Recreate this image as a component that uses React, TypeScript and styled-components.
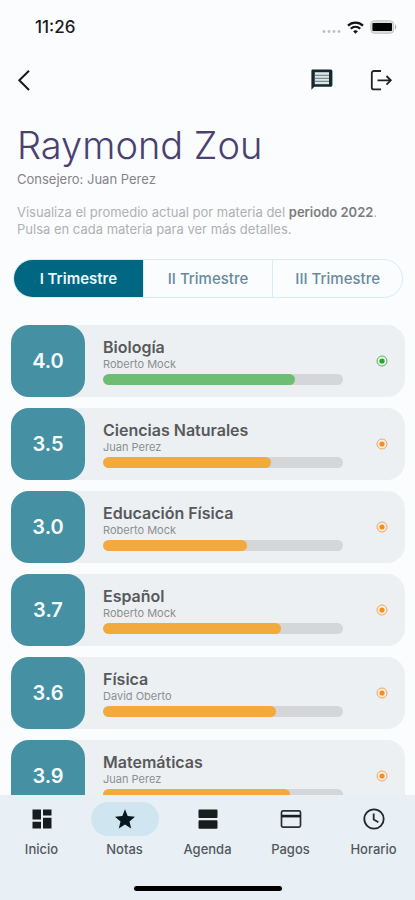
import React, { useState } from "react";
import styled, { createGlobalStyle } from "styled-components";

const GlobalStyle = createGlobalStyle`
  *, *::before, *::after { box-sizing: border-box; }
  body {
    margin: 0;
    background: #fbfcfe;
    font-family: Inter, "Liberation Sans", sans-serif;
  }
  button { font: inherit; color: inherit; background: none; border: 0; padding: 0; cursor: pointer; }
  a { color: inherit; text-decoration: none; }
  h1, h2, p, ul { margin: 0; padding: 0; }
  ul { list-style: none; }
  svg { display: block; }
`;

const Screen = styled.div`
  display: flex;
  flex-direction: column;
  height: 100vh;
`;

const StatusBar = styled.div`
  display: flex;
  flex: none;
  align-items: center;
  justify-content: space-between;
  height: 54px;
  padding: 0 18px 0 35px;
`;

const Clock = styled.time`
  font-size: 17px;
  font-weight: 500;
  line-height: 20px;
  color: #1b1b1d;
`;

const StatusIcons = styled.div`
  display: flex;
  align-items: center;
  gap: 6px;
`;

const AppBar = styled.header`
  display: flex;
  flex: none;
  align-items: center;
  justify-content: space-between;
  height: 52px;
  padding: 0 22px 0 12px;
`;

const Actions = styled.div`
  display: flex;
  gap: 35px;
`;

const IconButton = styled.button`
  display: grid;
  place-items: center;
  width: 24px;
  height: 24px;
`;

const Content = styled.main`
  flex: 1;
  min-height: 0;
  overflow-y: auto;
  scrollbar-width: none;
`;

const Intro = styled.section`
  padding: 15px 16px 0 17px;
`;

const StudentName = styled.h1`
  font-size: 38px;
  font-weight: 300;
  line-height: 48px;
  color: #4a4170;
`;

const Advisor = styled.p`
  margin-top: 2px;
  font-size: 13px;
  line-height: 16px;
  color: #858588;
`;

const Help = styled.p`
  margin-top: 17px;
  font-size: 13px;
  line-height: 17px;
  color: #b0b1b3;

  strong { font-weight: 600; color: #7c7d80; }
`;

const Terms = styled.div`
  display: flex;
  height: 39px;
  margin: 21px 12px 0 13px;
  overflow: hidden;
  border: 1px solid #d5edf8;
  border-radius: 20px;
`;

const Term = styled.button<{ $active: boolean }>`
  flex: 1;
  font-size: 15px;
  font-weight: ${(p) => (p.$active ? 600 : 500)};
  line-height: 20px;
  color: ${(p) => (p.$active ? "#eaf7fb" : "#678b9c")};
  background: ${(p) => (p.$active ? "#006783" : "transparent")};

  & + & { border-left: 1px solid #d5edf8; }
`;

const SubjectList = styled.ul`
  display: flex;
  flex-direction: column;
  gap: 11px;
  padding: 27px 10px 16px 11px;
`;

const SubjectCard = styled.button`
  display: flex;
  align-items: center;
  width: 100%;
  height: 72px;
  padding-right: 17px;
  text-align: left;
  background: #ecf0f3;
  border-radius: 18px;
`;

const Score = styled.span`
  display: grid;
  flex: none;
  place-items: center;
  width: 74px;
  height: 72px;
  font-size: 20px;
  font-weight: 600;
  line-height: 24px;
  color: #f5fcfe;
  background: #4690a3;
  border-radius: 18px;
`;

const SubjectBody = styled.span`
  display: flex;
  flex: 1;
  flex-direction: column;
  margin: 0 33px 0 18px;
`;

const SubjectName = styled.span`
  font-size: 16px;
  font-weight: 600;
  line-height: 20px;
  color: #58595b;
`;

const Teacher = styled.span`
  font-size: 11px;
  line-height: 14px;
  color: #8d8e90;
`;

const Track = styled.span`
  display: block;
  height: 11px;
  margin-top: 3px;
  overflow: hidden;
  background: #d5d6d7;
  border-radius: 6px;
`;

const Fill = styled.span<{ $color: string }>`
  display: block;
  height: 100%;
  background: ${(p) => p.$color};
  border-radius: 6px;
`;

const BottomNav = styled.nav`
  display: flex;
  flex: none;
  flex-direction: column;
  align-items: center;
  height: 105px;
  padding: 7px 0 9px;
  background: #e8eff5;
`;

const NavItems = styled.div`
  display: flex;
  width: 100%;
`;

const NavLink = styled.a`
  display: flex;
  flex: 1;
  flex-direction: column;
  align-items: center;
  gap: 5px;
  font-size: 13px;
  line-height: 16px;
  font-weight: 500;
  color: #54585c;
`;

const NavPill = styled.span<{ $active: boolean }>`
  display: grid;
  place-items: center;
  width: 68px;
  height: 34px;
  background: ${(p) => (p.$active ? "#cfe6f1" : "transparent")};
  border-radius: 17px;
`;

const HomeIndicator = styled.div`
  width: 148px;
  height: 5px;
  margin-top: auto;
  background: #000;
  border-radius: 3px;
`;

const SignalDots = () => (
  <svg width="19" height="13" viewBox="0 0 19 13" fill="#bdbec1">
    <circle cx="2" cy="10.5" r="1.4" />
    <circle cx="7" cy="10.5" r="1.4" />
    <circle cx="12" cy="10.5" r="1.4" />
    <circle cx="17" cy="10.5" r="1.4" />
  </svg>
);

const WifiIcon = () => (
  <svg width="17" height="13" viewBox="0 0 17 13" fill="none" stroke="#111" strokeWidth="2.2">
    <path d="M1 4.6a10.7 10.7 0 0 1 15 0" />
    <path d="M3.8 7.7a6.7 6.7 0 0 1 9.4 0" />
    <path d="M8.5 12.8 6.1 10.3a3.5 3.5 0 0 1 4.8 0z" fill="#111" stroke="none" />
  </svg>
);

const BatteryIcon = () => (
  <svg width="27" height="14" viewBox="0 0 27 14">
    <rect x="0.7" y="0.7" width="23" height="12.6" rx="3.6" fill="#dcdcdc" stroke="#c4c4c6" />
    <rect x="2.4" y="3" width="19.6" height="8" rx="1" fill="#000" />
    <path d="M25 4.5c1.7.6 1.7 4.4 0 5z" fill="#b0b0b3" />
  </svg>
);

const BackIcon = () => (
  <svg width="24" height="24" viewBox="0 0 24 24" fill="none" stroke="#17191a" strokeWidth="2">
    <path d="M17 2.7 7.3 12.3 17 22" />
  </svg>
);

const MessageIcon = () => (
  <svg width="24" height="24" viewBox="0 0 24 24">
    <path
      fill="#14282f"
      d="M2.6 1.6h18c1 0 1.800.800 1.800 1.800v13.600c0 1-.8 1.800-1.800 1.800H4.300L1.400 21.800V2.800c0-.7.500-1.200 1.200-1.200z"
    />
    <path fill="#dce4e7" d="M4.800 4.200h14.200v12H4.800z" />
    <path stroke="#7d8c92" strokeWidth="1.100" d="M4.800 7.400h14.200M4.800 10.400h14.200M4.800 13.400h14.200" />
  </svg>
);

const LogoutIcon = () => (
  <svg width="24" height="24" viewBox="0 0 24 24" fill="none" stroke="#202326" strokeWidth="1.800">
    <path d="M12 3H4.800a2 2 0 0 0-2 2v14.400a2 2 0 0 0 2 2H12" />
    <path d="M8.500 12.300h13M17.500 8l4.300 4.300-4.300 4.300" />
  </svg>
);

const TargetIcon = ({ color }: { color: string }) => (
  <svg width="12" height="12" viewBox="0 0 12 12">
    <circle cx="6" cy="6" r="5" fill="none" stroke={color} strokeOpacity="0.75" />
    <circle cx="6" cy="6" r="2.600" fill={color} />
  </svg>
);

const NavIcon = ({ name }: { name: string }) => (
  <svg width="24" height="24" viewBox="0 0 24 24" fill="#171c1f">
    {name === "Inicio" && (
      <path d="M2.500 2.500h8.500v10H2.500zM13 2.500h8.500v6H13zM13 10.700h8.500v10.800H13zM2.500 14.700h8.500v6.800H2.500z" />
    )}
    {name === "Notas" && (
      <path
        fill="#07171e"
        d="m12 17.600 6.200 4-1.700-7.200L22 9.700l-7.300-.6L12 2.200 9.300 9.100 2 9.700l5.500 4.700-1.700 7.200z"
      />
    )}
    {name === "Agenda" && (
      <path d="M3.500 2.500h17a1 1 0 0 1 1 1V10a1 1 0 0 1-1 1h-17a1 1 0 0 1-1-1V3.500a1 1 0 0 1 1-1zM3.500 13.300h17a1 1 0 0 1 1 1v6.400a1 1 0 0 1-1 1h-17a1 1 0 0 1-1-1v-6.400a1 1 0 0 1 1-1z" />
    )}
    {name === "Pagos" && (
      <>
        <rect x="2.500" y="3.800" width="19" height="16.400" rx="1.600" fill="none" stroke="#2a3034" strokeWidth="1.700" />
        <path d="M2.500 7.800h19v2.600h-19z" />
      </>
    )}
    {name === "Horario" && (
      <g fill="none" stroke="#22282c" strokeWidth="1.800">
        <circle cx="12" cy="12" r="9.700" />
        <path d="M11.700 6.500v6l4.700 2.800" />
      </g>
    )}
  </svg>
);

const MAX_SCORE = 5;
const terms = ["I Trimestre", "II Trimestre", "III Trimestre"];
const navItems = ["Inicio", "Notas", "Agenda", "Pagos", "Horario"];
const subjects = [
  { name: "Biología", teacher: "Roberto Mock", score: 4.0 },
  { name: "Ciencias Naturales", teacher: "Juan Perez", score: 3.5 },
  { name: "Educación Física", teacher: "Roberto Mock", score: 3.0 },
  { name: "Español", teacher: "Roberto Mock", score: 3.7 },
  { name: "Física", teacher: "David Oberto", score: 3.6 },
  { name: "Matemáticas", teacher: "Juan Perez", score: 3.9 },
];

export default function App() {
  const [term, setTerm] = useState(0);

  return (
    <>
      <GlobalStyle />
      <Screen>
        <StatusBar>
          <Clock>11:26</Clock>
          <StatusIcons aria-hidden="true">
            <SignalDots />
            <WifiIcon />
            <BatteryIcon />
          </StatusIcons>
        </StatusBar>
        <AppBar>
          <IconButton aria-label="Volver"><BackIcon /></IconButton>
          <Actions>
            <IconButton aria-label="Mensajes"><MessageIcon /></IconButton>
            <IconButton aria-label="Salir"><LogoutIcon /></IconButton>
          </Actions>
        </AppBar>
        <Content>
          <Intro>
            <StudentName>Raymond Zou</StudentName>
            <Advisor>Consejero: Juan Perez</Advisor>
            <Help>
              Visualiza el promedio actual por materia del <strong>periodo 2022</strong>.
              <br />
              Pulsa en cada materia para ver más detalles.
            </Help>
          </Intro>
          <Terms role="group" aria-label="Trimestre">
            {terms.map((label, i) => (
              <Term key={label} $active={i === term} aria-pressed={i === term} onClick={() => setTerm(i)}>
                {label}
              </Term>
            ))}
          </Terms>
          <SubjectList>
            {subjects.map(({ name, teacher, score }) => {
              const passed = score >= 4;
              return (
                <li key={name}>
                  <SubjectCard>
                    <Score>{score.toFixed(1)}</Score>
                    <SubjectBody>
                      <SubjectName>{name}</SubjectName>
                      <Teacher>{teacher}</Teacher>
                      <Track>
                        <Fill
                          $color={passed ? "#6fbd73" : "#f2aa3c"}
                          style={{ width: `${(score / MAX_SCORE) * 100}%` }}
                        />
                      </Track>
                    </SubjectBody>
                    <TargetIcon color={passed ? "#27a52c" : "#fb8c1d"} />
                  </SubjectCard>
                </li>
              );
            })}
          </SubjectList>
        </Content>
        <BottomNav aria-label="Principal">
          <NavItems>
            {navItems.map((label) => (
              <NavLink
                key={label}
                href={`#${label.toLowerCase()}`}
                aria-current={label === "Notas" ? "page" : undefined}
              >
                <NavPill $active={label === "Notas"}><NavIcon name={label} /></NavPill>
                {label}
              </NavLink>
            ))}
          </NavItems>
          <HomeIndicator />
        </BottomNav>
      </Screen>
    </>
  );
}
